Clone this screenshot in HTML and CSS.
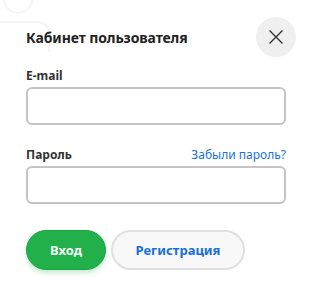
FILE: index.html
```html
<!DOCTYPE html>
<html lang="ru">
<head>
<meta charset="utf-8">
<link rel="stylesheet" href="styles.css">
</head>
<body>
<div class="modal">
  <svg class="watermark" width="60" height="60" viewBox="0 0 60 60" fill="none" stroke="#f4f4f4" stroke-width="2">
    <circle cx="18" cy="-1" r="14"/>
    <path d="M-10 22 H36 Q49 22 49 35 V52"/>
  </svg>
  <div class="header">
    <h1 class="title">Кабинет пользователя</h1>
    <button class="close" aria-label="Закрыть">
      <svg width="16" height="16" viewBox="0 0 16 16" stroke="#333" stroke-width="1.4" fill="none"><path d="M1.5 1.5 L14.5 14.5 M14.5 1.5 L1.5 14.5"/></svg>
    </button>
  </div>
  <div class="field">
    <div class="label-row"><label class="label">E-mail</label></div>
    <input class="input" type="text">
  </div>
  <div class="field field-pass">
    <div class="label-row"><label class="label">Пароль</label><a class="forgot" href="#">Забыли пароль?</a></div>
    <input class="input" type="password">
  </div>
  <div class="actions">
    <button class="btn btn-login">Вход</button>
    <button class="btn btn-reg">Регистрация</button>
  </div>
</div>
</body>
</html>
```
FILE: styles.css
```css
* { box-sizing: border-box; }
html, body { margin: 0; background: #fff; }
body { font-family: "Noto Sans", "Open Sans", sans-serif; color: #222; }
.modal { position: relative; width: 312px; height: 296px; padding: 17px 16px 0 26px; overflow: hidden; }
.watermark { position: absolute; left: 0; top: 0; }
.header { position: relative; display: flex; align-items: center; justify-content: space-between; height: 40px; }
.title { margin: 0; font-size: 14px; font-weight: 700; color: #222; letter-spacing: -0.1px; }
.close { width: 40px; height: 40px; border-radius: 50%; border: none; background: #efefef; display: flex; align-items: center; justify-content: center; padding: 0; }
.field { width: 260px; margin-top: 8px; }
.field-pass { margin-top: 19px; }
.label-row { display: flex; justify-content: space-between; align-items: baseline; height: 22px; padding-top: 2px; }
.label { font-size: 12px; font-weight: 700; color: #333; }
.forgot { font-size: 12px; color: #1a73d9; text-decoration: none; }
.input { display: block; width: 260px; height: 38px; border: 2px solid #c4c4c4; border-radius: 6px; background: #fff; }
.actions { display: flex; gap: 5px; margin-top: 26px; }
.btn { height: 40px; border-radius: 20px; font-family: inherit; font-size: 13px; font-weight: 700; padding: 0; }
.btn-login { width: 80px; background: #22b04b; color: #f4fff6; border: 1px solid #1ea344; box-shadow: 0 3px 5px rgba(34,176,75,0.25); }
.btn-reg { width: 134px; background: #f8f8f8; color: #1a6fd6; border: 2px solid #e0e0e0; }
```
